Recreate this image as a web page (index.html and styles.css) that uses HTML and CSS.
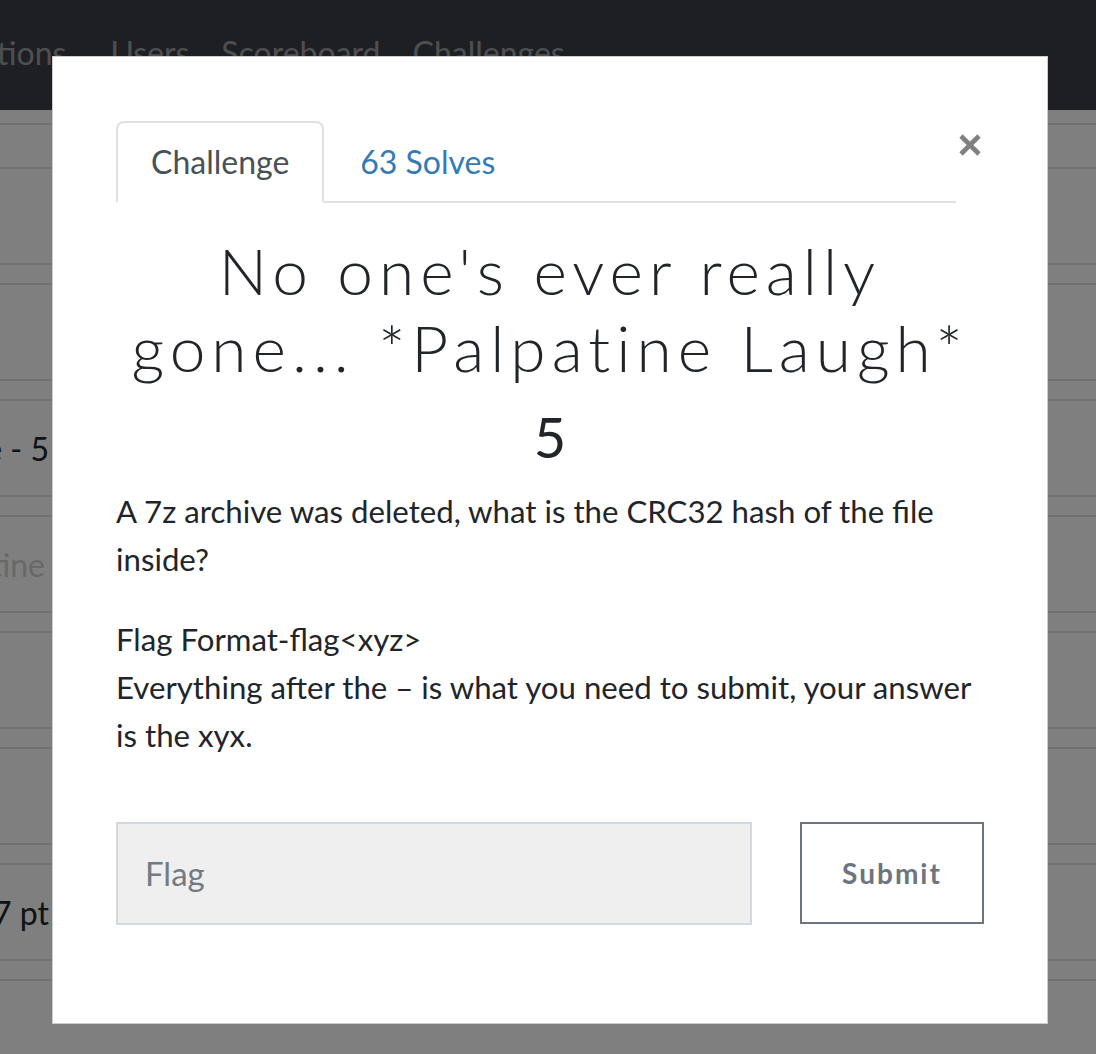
FILE: index.html
```html
<!DOCTYPE html>
<html lang="en">
<head>
<meta charset="utf-8">
<title>Challenge</title>
<link rel="stylesheet" href="styles.css">
</head>
<body>
<header class="navbar">
  <nav class="nav-links">
    <a class="nav-link first">Notifications</a>
    <a class="nav-link">Users</a>
    <a class="nav-link">Scoreboard</a>
    <a class="nav-link">Challenges</a>
  </nav>
</header>
<main class="page">
  <div class="page-header"></div>
  <ul class="rows">
    <li class="row"><span class="row-label"></span></li>
    <li class="row"><span class="row-label"></span></li>
    <li class="row"><span class="row-label">Challenge - 5</span></li>
    <li class="row"><span class="row-label muted">Palpatine</span></li>
    <li class="row"><span class="row-label"></span></li>
    <li class="row"><span class="row-label"></span></li>
    <li class="row"><span class="row-label">27 pt</span></li>
    <li class="row"><span class="row-label"></span></li>
  </ul>
</main>
<div class="backdrop"></div>
<div class="modal">
  <div class="modal-header">
    <ul class="tabs">
      <li class="tab active">Challenge</li>
      <li class="tab link">63 Solves</li>
    </ul>
    <button class="close" aria-label="Close">
      <svg width="22" height="22" viewBox="0 0 22 22"><path d="M2 2 L20 20 M20 2 L2 20" stroke="#808080" stroke-width="4.6" fill="none"/></svg>
    </button>
  </div>
  <h2 class="title">No one's ever really gone... *Palpatine Laugh*</h2>
  <h3 class="value">5</h3>
  <div class="description">
    <p>A 7z archive was deleted, what is the CRC32 hash of the file inside?</p>
    <p>Flag Format-flag&lt;xyz&gt;<br>Everything after the – is what you need to submit, your answer is the xyx.</p>
  </div>
  <form class="flag-form">
    <input class="flag-input" type="text" placeholder="Flag">
    <button class="submit" type="button">Submit</button>
  </form>
</div>
</body>
</html>
```
FILE: styles.css
```css
* { box-sizing: border-box; }
html, body { margin: 0; padding: 0; }
body {
  width: 1096px;
  height: 1054px;
  overflow: hidden;
  background: #ffffff;
  font-family: Lato, "Noto Sans", sans-serif;
  color: #212529;
  position: relative;
}

.navbar {
  height: 110px;
  background: #3c3e46;
}
.nav-links {
  display: flex;
  gap: 32px;
  padding-top: 35px;
  margin-left: -114px;
}
.nav-link {
  font-size: 32px;
  line-height: 36px;
  color: rgba(255, 255, 255, 0.5);
  white-space: nowrap;
}
.nav-link.first { margin-right: 12px; }

.page-header {
  height: 15px;
  border-bottom: 2px solid #dee2e6;
}
.rows {
  list-style: none;
  margin: 42px 0 0;
  padding: 0;
}
.row {
  height: 98px;
  border-top: 2px solid #dee2e6;
  border-bottom: 2px solid #dee2e6;
  margin-bottom: 18px;
  display: flex;
  align-items: center;
}
.row-label {
  width: 49px;
  display: flex;
  justify-content: flex-end;
  white-space: nowrap;
  font-size: 32px;
  color: #212529;
}
.row-label.muted { width: 45px; color: #d0d0d0; }

.backdrop {
  position: absolute;
  inset: 0;
  background: rgba(0, 0, 0, 0.5);
}

.modal {
  position: absolute;
  left: 52px;
  top: 56px;
  width: 996px;
  height: 968px;
  background: #ffffff;
  border: 1px solid rgba(0, 0, 0, 0.2);
  padding: 64px 63px 0;
}
.modal-header {
  display: flex;
  align-items: flex-start;
}
.tabs {
  flex: 1;
  display: flex;
  list-style: none;
  margin: 0;
  padding: 0;
  border-bottom: 2px solid #dee2e6;
}
.tab {
  font-size: 32px;
  line-height: 48px;
  padding: 15px 33px;
  border: 2px solid transparent;
  border-radius: 8px 8px 0 0;
  margin-bottom: -2px;
}
.tab.active {
  color: #495057;
  border-color: #dee2e6 #dee2e6 #ffffff;
  background: #ffffff;
}
.tab.link { color: #337ab7; padding-left: 34px; }
.close {
  width: 28px;
  height: 40px;
  margin-top: 13px;
  padding: 0 0 0 3px;
  border: 0;
  background: none;
  display: flex;
  align-items: flex-start;
}

.title {
  margin: 30px 0 16px;
  font-family: Lato, "Noto Sans", sans-serif;
  font-weight: 300;
  font-size: 64px;
  line-height: 1.2;
  letter-spacing: 6px;
  text-align: center;
  color: #212529;
}
.value {
  margin: 0 0 17px;
  font-weight: 400;
  font-size: 56px;
  line-height: 1.2;
  text-align: center;
  color: #212529;
}
.description p {
  margin: 0 0 32px;
  font-size: 31.2px;
  line-height: 48px;
}
.flag-form {
  margin-top: 63px;
  display: flex;
  gap: 48px;
}
.flag-input {
  flex: 1;
  height: 103px;
  background: #efefef;
  border: 2px solid #d2d8de;
  padding: 0 27px;
  font-family: Lato, sans-serif;
  font-size: 33px;
  color: #495057;
  outline: none;
}
.flag-input::placeholder { color: #737a81; }
.submit {
  width: 184px;
  height: 102px;
  background: #ffffff;
  border: 2px solid #6c757d;
  font-family: Lato, sans-serif;
  font-weight: 700;
  font-size: 28px;
  letter-spacing: 2px;
  color: #6c757d;
}
```
